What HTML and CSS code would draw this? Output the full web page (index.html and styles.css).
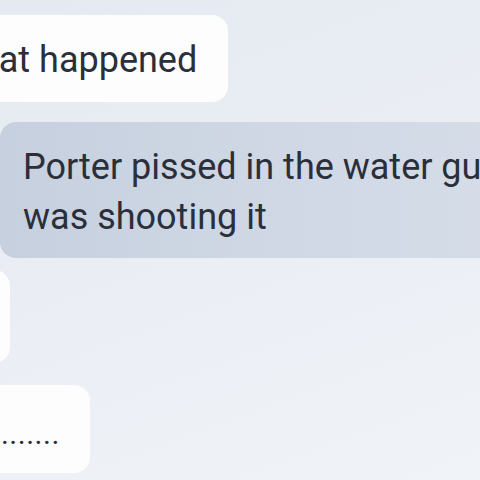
FILE: index.html
```html
<!DOCTYPE html>
<html lang="en">
<head>
    <meta charset="UTF-8">
    <meta name="viewport" content="width=device-width, initial-scale=1.0">
    <title>Chat</title>
    <link rel="stylesheet" href="styles.css">
</head>
<body>
    <div class="chat">
        <div class="bubble incoming first">
            <span class="text">What happened</span>
        </div>

        <div class="bubble outgoing">
            <span class="text">Porter pissed in the water gun while he<br>was shooting it</span>
        </div>

        <div class="bubble incoming blank"></div>

        <div class="bubble incoming last">
            <span class="text">Bruh.......</span>
        </div>
    </div>
</body>
</html>
```

FILE: styles.css
```css
:root {
    --bg-top: #e5eaf1;
    --bg-bottom: #f0f3f8;
    --incoming: #fdfdfe;
    --outgoing-left: #c6d0de;
    --outgoing-right: #d6dde9;
    --ink: #2a2f3a;
}

* {
    box-sizing: border-box;
    margin: 0;
    padding: 0;
}

html,
body {
    width: 480px;
    height: 480px;
    overflow: hidden;
}

body {
    font-family: Roboto, 'Liberation Sans', sans-serif;
    background: linear-gradient(160deg, var(--bg-top) 0%, #eaeef4 45%, var(--bg-bottom) 100%);
    color: var(--ink);
}

.chat {
    display: flex;
    flex-direction: column;
    align-items: flex-start;
    padding-top: 15px;
}

.bubble {
    font-size: 36px;
    line-height: 50px;
    padding: 20px 31px 17px 23px;
    border-radius: 16px;
    white-space: nowrap;
}

.incoming {
    background: var(--incoming);
}

.outgoing {
    background: linear-gradient(90deg, var(--outgoing-left) 0%, #d0d8e5 55%, var(--outgoing-right) 100%);
    width: 520px;
    margin-top: 20px;
    padding-bottom: 16px;
}

.first {
    margin-left: -76px;
    height: 87px;
}

.blank {
    width: 120px;
    height: 93px;
    margin-left: -110px;
    margin-top: 12px;
}

.last {
    margin-left: -86px;
    margin-top: 22px;
    height: 88px;
    padding-top: 22px;
    padding-right: 30px;
}

.last .text {
    font-size: 30px;
    letter-spacing: 0.5px;
}
```
